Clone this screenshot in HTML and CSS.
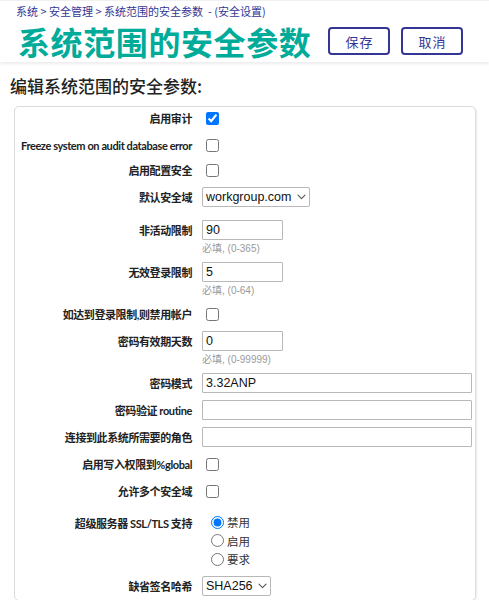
FILE: index.html
```html
<!DOCTYPE html>
<html lang="zh-CN">
<head>
<meta charset="utf-8">
<title>系统范围的安全参数</title>
<link rel="stylesheet" href="styles.css">
</head>
<body>
<header class="page-header">
  <nav class="crumbs"><a>系统</a> &gt; <a>安全管理</a> &gt; <a>系统范围的安全参数</a> &nbsp;- (安全设置)</nav>
  <div class="title-row">
    <h1 class="title">系统范围的安全参数</h1>
    <div class="actions">
      <button class="btn" type="button">保存</button>
      <button class="btn" type="button">取消</button>
    </div>
  </div>
</header>
<main class="content">
  <h2 class="section-title">编辑系统范围的安全参数:</h2>
  <div class="panel">
    <div class="form">
      <label class="label">启用审计</label>
      <div class="field check"><input type="checkbox" checked></div>

      <label class="label">Freeze system on audit database error</label>
      <div class="field check"><input type="checkbox"></div>

      <label class="label tight">启用配置安全</label>
      <div class="field check tight"><input type="checkbox"></div>

      <label class="label">默认安全域</label>
      <div class="field">
        <span class="select-wrap">
          <select class="select"><option>workgroup.com</option></select>
          <svg class="chevron" width="9" height="6" viewBox="0 0 9 6" aria-hidden="true"><path d="M1 1.2 L4.5 4.6 L8 1.2" fill="none" stroke="#555" stroke-width="1.1" stroke-linecap="round" stroke-linejoin="round"/></svg>
        </span>
      </div>

      <label class="label gap-top">非活动限制</label>
      <div class="field gap-top"><input class="text short" type="text" value="90"><div class="hint">必填, (0-365)</div></div>

      <label class="label">无效登录限制</label>
      <div class="field"><input class="text short" type="text" value="5"><div class="hint">必填, (0-64)</div></div>

      <label class="label">如达到登录限制,则禁用帐户</label>
      <div class="field check"><input type="checkbox"></div>

      <label class="label">密码有效期天数</label>
      <div class="field"><input class="text short" type="text" value="0"><div class="hint">必填, (0-99999)</div></div>

      <label class="label">密码模式</label>
      <div class="field"><input class="text wide" type="text" value="3.32ANP"></div>

      <label class="label">密码验证 routine</label>
      <div class="field"><input class="text wide" type="text" value=""></div>

      <label class="label">连接到此系统所需要的角色</label>
      <div class="field"><input class="text wide" type="text" value=""></div>

      <label class="label">启用写入权限到%global</label>
      <div class="field check"><input type="checkbox"></div>

      <label class="label">允许多个安全域</label>
      <div class="field check"><input type="checkbox"></div>

      <label class="label gap-top-lg">超级服务器 SSL/TLS 支持</label>
      <div class="field radios gap-top-lg">
        <label class="radio"><input type="radio" name="ssl" checked>禁用</label>
        <label class="radio"><input type="radio" name="ssl">启用</label>
        <label class="radio"><input type="radio" name="ssl">要求</label>
      </div>

      <label class="label">缺省签名哈希</label>
      <div class="field">
        <span class="select-wrap">
          <select class="select"><option>SHA256</option></select>
          <svg class="chevron" width="9" height="6" viewBox="0 0 9 6" aria-hidden="true"><path d="M1 1.2 L4.5 4.6 L8 1.2" fill="none" stroke="#555" stroke-width="1.1" stroke-linecap="round" stroke-linejoin="round"/></svg>
        </span>
      </div>
    </div>
  </div>
</main>
</body>
</html>
```

FILE: styles.css
```css
* { box-sizing: border-box; }

html, body {
  margin: 0;
  padding: 0;
  background: #ffffff;
}

body {
  font-family: "Noto Sans CJK SC", "Noto Sans", sans-serif;
  color: #222;
}

.page-header {
  padding: 4px 16px 3px 16px;
  background: #fff;
  border-top: 1px solid #f0f0f0;
  box-shadow: 0 2px 3px rgba(0, 0, 0, 0.08);
}

.crumbs {
  font-size: 11px;
  line-height: 13px;
  color: #333695;
}

.crumbs a {
  color: #333695;
  text-decoration: none;
}

.title-row {
  display: flex;
  align-items: center;
  gap: 17px;
  padding-left: 2px;
  margin-top: 5px;
}

.title {
  margin: 0;
  font-size: 32px;
  line-height: 36px;
  font-weight: 700;
  color: #00ab99;
  letter-spacing: 0.6px;
}

.actions {
  display: flex;
  gap: 11px;
}

.btn {
  width: 62px;
  height: 28px;
  border: 2px solid #333695;
  border-radius: 4px;
  background: #fff;
  color: #333695;
  font-family: "Noto Sans CJK SC", sans-serif;
  font-size: 13px;
  letter-spacing: 1px;
  padding: 0;
}

.content {
  padding: 12px 13px 0 14px;
}

.section-title {
  margin: 0 0 8px -4px;
  font-size: 17px;
  line-height: 24px;
  font-weight: 500;
  color: #222;
}

.panel {
  border: 1px solid #dcdcdc;
  border-radius: 5px;
  box-shadow: 1px 1px 2px rgba(0, 0, 0, 0.08);
  padding: 1px 3px 4px 0;
}

.form {
  display: grid;
  grid-template-columns: 177px 1fr;
  column-gap: 10px;
  row-gap: 7px;
}

.label {
  text-align: right;
  font-family: "Lato", "Noto Sans CJK SC", sans-serif;
  font-size: 11px;
  font-weight: 700;
  letter-spacing: -0.4px;
  padding-top: 2px;
  line-height: 18px;
  color: #222;
  white-space: nowrap;
}

.field {
  display: flex;
  flex-direction: column;
  align-items: flex-start;
  min-height: 20px;
}

.field.check {
  justify-content: center;
}

.field.check input {
  margin: 0 0 0 4px;
  width: 13px;
  height: 13px;
}

.tight { margin-top: -2px; }
.gap-top { margin-top: 6px; }
.gap-top-lg { margin-top: 5px; }

.text {
  display: block;
  height: 20px;
  border: 1px solid #b8b8b8;
  border-radius: 1px;
  padding: 0 3px;
  font-family: "Liberation Sans", Arial, sans-serif;
  font-size: 12.5px;
  color: #111;
  background: #fff;
  margin: 0;
}

.text.short { width: 81px; }
.text.wide { width: 270px; }

.hint {
  margin-top: 3px;
  font-family: "Liberation Sans", "Noto Sans CJK SC", sans-serif;
  font-size: 10px;
  line-height: 12px;
  color: #9a9a9a;
}

.select-wrap {
  position: relative;
  display: block;
}

.select {
  appearance: none;
  -webkit-appearance: none;
  display: block;
  height: 20px;
  border: 1px solid #b8b8b8;
  border-radius: 2px;
  background: #fff;
  font-family: "Liberation Sans", Arial, sans-serif;
  font-size: 12.5px;
  line-height: 18px;
  color: #111;
  padding: 0 17px 0 3px;
  margin: 0;
}

.chevron {
  position: absolute;
  right: 4px;
  top: 7px;
  pointer-events: none;
}

.radios {
  display: flex;
  flex-direction: column;
}

.radio {
  display: flex;
  align-items: center;
  height: 18.5px;
  font-size: 11.5px;
  color: #333;
}

.radio input {
  margin: 0 3px 0 9px;
  width: 13px;
  height: 13px;
}
```
